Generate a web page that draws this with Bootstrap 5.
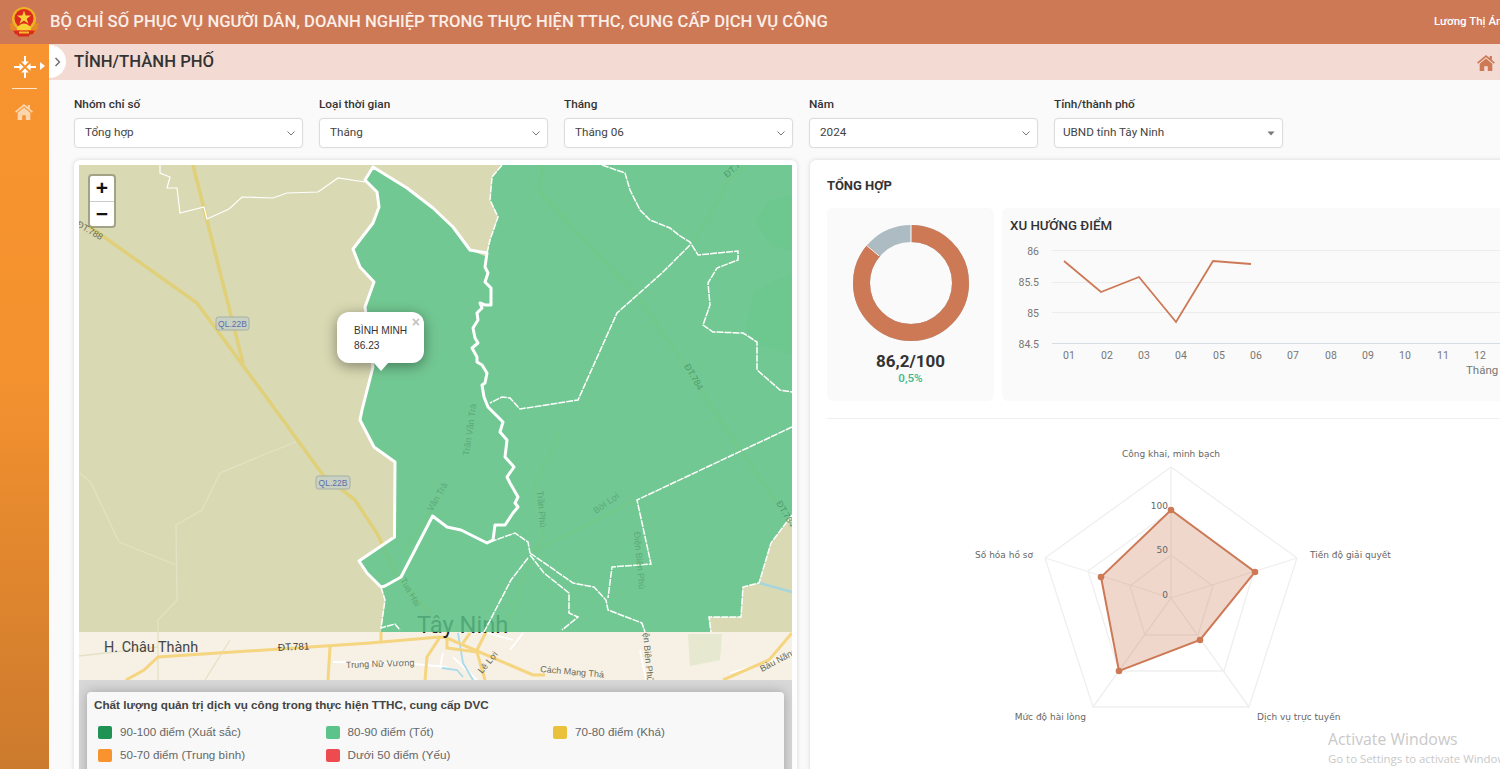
<!DOCTYPE html>
<html lang="vi">
<head>
<meta charset="UTF-8">
<meta name="viewport" content="width=device-width, initial-scale=1.0">
<title>Bộ chỉ số phục vụ</title>
<link rel="stylesheet" href="https://cdn.jsdelivr.net/npm/bootstrap@5.3.3/dist/css/bootstrap.min.css">
<style>
html, body { height: 100%; overflow: hidden; }
body { font-family: Roboto, "Liberation Sans", sans-serif; background: #fafafa; color: #333; }
.top-bar { height: 44px; background: #cd7956; color: #fff; flex-wrap: nowrap; padding: 0 0 0 8px; overflow: hidden; }
.top-title { font-size: 16.65px; font-weight: 500; margin-left: 10px; white-space: nowrap; color: #fbeee8; }
.top-user { font-size: 11.5px; font-weight: 500; white-space: nowrap; width: 66px; overflow: hidden; flex: none; }
.page-body { height: 725px; }
.side-bar { width: 49px; flex: none; background: linear-gradient(180deg, #f79430 0%, #f4922f 45%, #cc7a2d 100%); }
.side-rule { width: 25px; height: 1px; background: #fde6cb; margin: 10px 0 15px 12px; }
.side-top { height: 34px; padding-left: 14px; padding-top: 12px; position: relative; }
.side-top svg, .side-home svg { display: block; }
.side-caret { position: absolute; left: 40px; top: 18px; width: 0; height: 0; border-left: 5px solid #fff; border-top: 4px solid transparent; border-bottom: 4px solid transparent; }
.side-home { padding-left: 15px; }
.main-area { min-width: 0; overflow: hidden; }
.sub-head { height: 36px; background: #f3dbd3; padding: 1px 5px 0 25px; position: relative; }
.sub-title { font-size: 16.7px; font-weight: 500; color: #333; margin: 0; }
.side-toggle { position: absolute; left: 0; top: 1px; width: 17px; height: 33px; background: #fff; border-radius: 0 17px 17px 0; display: flex; align-items: center; padding-left: 5px; }
.filter-row { padding: 17px 0 0 25px; height: 80px; }
.filter-item { width: 229px; flex: none; }
.filter-label { font-size: 11.8px; font-weight: 500; color: #333; margin-bottom: 7px; line-height: 14px; display: block; }
.filter-select { height: 30px; font-size: 11.7px; color: #444; padding: 0 20px 0 10px; border-color: #dcdcdc; border-radius: 4px; box-shadow: 0 0 2px rgba(0,0,0,.06);
  background-size: 10px 10px; background-position: right 6px center;
  background-image: url("data:image/svg+xml,%3csvg xmlns='http://www.w3.org/2000/svg' viewBox='0 0 10 10'%3e%3cpath fill='none' stroke='%23777' d='M1.5 3.5 5 7l3.5-3.5'/%3e%3c/svg%3e"); }
.filter-select.caret-solid { padding-left: 8px; background-image: url("data:image/svg+xml,%3csvg xmlns='http://www.w3.org/2000/svg' viewBox='0 0 10 10'%3e%3cpath fill='%23777' d='M1.500 3.500h7L5 7.500z'/%3e%3c/svg%3e"); }
.cards-row { padding-left: 25px; gap: 13px; }
.map-card { width: 723px; height: 640px; flex: none; background: #fff; border: 0; border-radius: 6px; padding: 5px; box-shadow: 0 0 5px rgba(0,0,0,.14); }
.map-box { position: relative; height: 515px; overflow: hidden; }
.map-box svg { display: block; }
.zoom-box { position: absolute; left: 9px; top: 9px; width: 28px; border: 2px solid rgba(0,0,0,.25); border-radius: 4px; background: #fff; background-clip: padding-box; }
.zoom-btn { height: 25px; text-align: center; font: 700 21px/24px "Liberation Sans", sans-serif; color: #111; }
.zoom-btn + .zoom-btn { border-top: 1px solid #ccc; }
.map-pop { position: absolute; left: 258px; top: 147px; width: 87px; height: 51px; background: #fff; border-radius: 12px; box-shadow: 0 3px 14px rgba(0,0,0,.4); padding: 11px 0 0 17px; font: 10.2px/15px "Liberation Sans", sans-serif; color: #333; }
.map-pop::after { content: ""; position: absolute; left: 36px; bottom: -8px; border-left: 8px solid transparent; border-right: 8px solid transparent; border-top: 9px solid #fff; }
.pop-x { position: absolute; right: 4px; top: 3px; font: 700 14px/14px "Liberation Sans", sans-serif; color: #c3c3c3; }
.legend-wrap { background: #d8d8d8; padding: 12px 8px 0; height: 115px; margin-bottom: -5px; }
.legend-box { background: #f8f8f8; border-radius: 4px; box-shadow: 0 0 12px rgba(0,0,0,.25); padding: 6px 7px; height: 103px; font-family: "Liberation Sans", sans-serif; }
.legend-title { font-size: 11.7px; font-weight: 700; color: #444; line-height: 14px; margin-bottom: 13px; }
.legend-grid { display: grid; grid-template-columns: repeat(3, 227.5px); row-gap: 9px; padding-left: 4px; }
.legend-item { display: flex; align-items: center; gap: 8px; font-size: 11.65px; line-height: 14px; color: #666; }
.legend-swatch { width: 14px; height: 13px; border-radius: 2px; flex: none; }
.sum-card { width: 720px; height: 640px; flex: none; background: #fff; border: 0; border-radius: 6px; padding: 17px 17px 0; box-shadow: 0 0 5px rgba(0,0,0,.14); }
.sum-title { font-size: 13px; font-weight: 700; color: #333; margin: 1px 0 14px; line-height: 16px; }
.panel-soft { background: #fafafa; border-radius: 6px; height: 193px; }
.donut-panel { width: 167px; flex: none; padding-top: 17px; text-align: center; }
.donut-panel svg { display: block; margin: 0 auto 10px; }
.donut-value { font-size: 17px; font-weight: 700; line-height: 20px; color: #333; }
.donut-delta { font-size: 11.6px; font-weight: 500; line-height: 15px; color: #3bb98a; }
.trend-panel { flex: 1; min-width: 0; padding-top: 10px; }
.trend-title { font-size: 13.3px; font-weight: 500; color: #333; margin: 0 0 0 8px; line-height: 15px; height: 18px; }
.trend-panel svg { display: block; }
.sum-rule { height: 1px; background: #f0f0f0; margin: 17px 0 0; }
.radar-chart { display: block; }
.win-mark { position: absolute; left: 1328px; top: 730px; color: #c9c9c9; font-family: "Open Sans", sans-serif; white-space: nowrap; pointer-events: none; }
.win-mark div:first-child { font-size: 15.8px; line-height: 19px; }
.win-mark div:last-child { font-size: 11.4px; line-height: 19px; }
</style>
</head>
<body>
<nav class="navbar top-bar d-flex align-items-center justify-content-between">
  <div class="d-flex align-items-center">
    <svg width="32" height="32" viewBox="0 0 32 32">
      <path d="M4 17 1 18l2 3-1 2 3 1 0 3 4-1 2 3h10l2-3 4 1 0-3 3-1-1-2 2-3-3-1-3 6H7z" fill="#ee8a1c"/>
      <circle cx="16" cy="13" r="12" fill="#f1b124"/>
      <circle cx="16" cy="12.500" r="9.500" fill="#dc2a1e"/>
      <path d="M16 4.500l1.700 5.100h5.300l-4.300 3.100 1.700 5-4.400-3.100-4.400 3.100 1.700-5-4.300-3.100h5.300z" fill="#fbd23a"/>
      <path d="M9 24a7 6.500 0 0 1 14 0z" fill="#f9cf36"/>
      <path d="M5 24.500h22l-2 3.500-3 .5-1.500 2H10.500L9 28.500 7 28z" fill="#d92c1c"/>
      <rect x="11" y="25.500" width="10" height="2" fill="#f6b92b"/>
    </svg>
    <span class="top-title">BỘ CHỈ SỐ PHỤC VỤ NGƯỜI DÂN, DOANH NGHIỆP TRONG THỰC HIỆN TTHC, CUNG CẤP DỊCH VỤ CÔNG</span>
  </div>
  <span class="top-user">Lương Thị Ánh</span>
</nav>

<div class="page-body d-flex">
  <aside class="side-bar">
    <div class="side-top">
      <svg width="22" height="22" viewBox="0 0 22 22" fill="#fff">
        <path d="M10 0h2v5.500h2.800L11 9.600 7.200 5.500H10zM10 22h2v-5.500h2.800L11 12.400l-3.800 4.100H10zM0 10v2h5.500v2.800L9.600 11 5.500 7.200V10zM22 10v2h-5.500v2.800L12.400 11l4.100-3.800V10z"/>
      </svg>
      <span class="side-caret"></span>
    </div>
    <div class="side-rule"></div>
    <div class="side-home">
      <svg width="18" height="16" viewBox="0 0 19 17" fill="#fbd6ad">
        <path d="M9.500 0 0 8l1.100 1.300L9.500 2.300l8.400 7L19 8l-3.200-2.700V1h-2.400v2.300z"/>
        <path d="M9.500 3.700 2.800 9.300V17h4.800v-5h3.800v5h4.800V9.300z"/>
      </svg>
    </div>
  </aside>

  <main class="main-area flex-grow-1">
    <div class="sub-head d-flex align-items-center justify-content-between">
      <div class="side-toggle">
        <svg width="7" height="10" viewBox="0 0 7 10"><path d="M1.500 1 5.500 5l-4 4" fill="none" stroke="#666" stroke-width="1.300"/></svg>
      </div>
      <h1 class="sub-title">TỈNH/THÀNH PHỐ</h1>
      <svg width="18" height="16" viewBox="0 0 19 17" fill="#cd7956">
        <path d="M9.500 0 0 8l1.100 1.300L9.500 2.300l8.400 7L19 8l-3.200-2.700V1h-2.400v2.300z"/>
        <path d="M9.500 3.700 2.800 9.300V17h4.800v-5h3.800v5h4.800V9.300z"/>
      </svg>
    </div>

    <div class="filter-row d-flex gap-3">
      <div class="filter-item">
        <label class="filter-label">Nhóm chỉ số</label>
        <select class="form-select filter-select"><option>Tổng hợp</option></select>
      </div>
      <div class="filter-item">
        <label class="filter-label">Loại thời gian</label>
        <select class="form-select filter-select"><option>Tháng</option></select>
      </div>
      <div class="filter-item">
        <label class="filter-label">Tháng</label>
        <select class="form-select filter-select"><option>Tháng 06</option></select>
      </div>
      <div class="filter-item">
        <label class="filter-label">Năm</label>
        <select class="form-select filter-select"><option>2024</option></select>
      </div>
      <div class="filter-item">
        <label class="filter-label">Tỉnh/thành phố</label>
        <select class="form-select filter-select caret-solid"><option>UBND tỉnh Tây Ninh</option></select>
      </div>
    </div>

    <div class="cards-row d-flex">
      <div class="card map-card">
        <div class="map-box">
          <svg width="713" height="515" viewBox="79 165 713 515">
            <!-- base tiles -->
            <rect x="79" y="165" width="713" height="467" fill="#d9d9b3"/>
            <rect x="79" y="632" width="713" height="48" fill="#f6f0e5"/>
            <path d="M688 634h34l-2 26-30 6z" fill="#e6e9cf"/>
            <path d="M792 195 770 200 755 220 770 245 792 252ZM792 273 755 290 745 330 760 345 792 355Z" fill="#b4d7a0"/>
            <g fill="none" stroke="#e3e3c4" stroke-width="1.300">
              <path d="M296 442 268 453 220 473 202 510 176 525 177 600 158 620V680"/>
              <path d="M80 473 91 483 119 542 176 565"/>
              <path d="M79 656 158 647M230 640 205 680"/>
            </g>
            <!-- roads -->
            <g fill="none" stroke="#e1d07a" stroke-width="3.500">
              <path d="M90 227 197 303 283 420 323 475 355 500 378 535 397 577 429 613"/>
              <path d="M193 165 243 363"/>
              <path d="M542 165 540 192 640 300 683 363 733 440 777 503" stroke="#d9d38b"/>
              <path d="M693 242 717 203 728 180 747 165" stroke="#d9d38b"/>
              <path d="M532 552 635 500M562 430 535 483 544 537 532 552" stroke="#d9d38b" stroke-width="2.500"/>
              <path d="M445 490 405 550M505 632 530 560" stroke="#d9d38b" stroke-width="2.500"/>
            </g>
            <path d="M759 583 792 592" stroke="#a5d6dd" stroke-width="2.500"/>
            <g fill="none" stroke="#fff" stroke-width="1.800">
              <path d="M333 662 403 663 447 667M523 633 510 650M487 633 513 640M453 657 477 680M440 667 443 653M640 650 646 680M730 673 792 655"/>
            </g>
            <path d="M458 633 463 663 473 680M442 668 457 670 463 677" fill="none" stroke="#a8dcea" stroke-width="1.800"/>
            <g fill="none" stroke="#f5d57f" stroke-width="3">
              <path d="M126 680 144 670 158 657 370 643 440 637 447 638 533 675 545 675"/>
              <path d="M330 647 328 680M381 632V642M440 637 427 657 425 680M447 638V648L477 652 485 680M487 630 477 650M470 633 463 643"/>
              <path d="M723 680 769 660 792 633"/>
            </g>
            <text x="417" y="633" font-family="Roboto, sans-serif" font-size="23.700" fill="#222">Tây Ninh</text>
            <!-- green district layer -->
            <path fill="#5cc58b" fill-opacity=".82" d="M373 167 407 188 433 208 453 227 470 250 487 257 490 240 498 217 490 200 492 177 502 165H792V515L771 543 759 583 743 587 741 617 709 617 711 632H381L385 600 381 587 367 573 359 561 394.500 537 395 462 374 447 360 420 362 410 373 367 365 307 374 282 360 267 353 249 373 223 379 207 377 192 365 180Z"/>
            <!-- thin district borders -->
            <g fill="none" stroke="#fff" stroke-width="1.500" stroke-dasharray="7 1">
              <path d="M602 165 625 173 630 190 640 210 650 220 670 228 680 236 690 242 698 255 738 251 738 260 717 268 708 283 710 305 703 325 713 332 743 333 757 342 757 370 780 390 792 392"/>
              <path d="M690 245 662 273 617 313 578 400 520 409 510 398 502 397 490 403"/>
              <path d="M792 427 637 500 651 564 612 567 608 598"/>
              <path d="M530 553 573 583 594 587 606 600 608 610 642 623 645 632"/>
              <path d="M530 555 544 573 569 593 569 613 578 617 562 630"/>
              <path d="M528 558 511 580 484 632"/>
              <path d="M490 542 515 533 528 542 530 553"/>
              <path d="M792 515 771 543 759 583 743 587 741 617 709 617 711 632"/>
              <path d="M381 587 385 600 381 628 395 624 400 630"/>
              <path d="M487 253 490 240 498 217 490 200 492 177 502 165"/>
              <path d="M160 165 160 173 170 177 167 188 177 188 180 213 204 207 207 219 229 209 242 197 273 198 287 193 318 192 338 178 365 182" stroke-dasharray="none" stroke-width="1.200"/>
            </g>
            <!-- selected district -->
            <path fill="none" stroke="#fff" stroke-width="3" stroke-linejoin="round" d="M373 167 407 188 433 208 453 227 470 250 487 253 485 267 488 273 485 282 491 288 491 305 485 305 480 303 482 308 477 313 478 320 473 328 475 338 478 343 472 348 477 357 477 362 482 365 487 373 485 383 482 385 484 397 488 407 503 422 500 432 507 440 505 457 514 467 507 477 510 483 518 497 515 503 518 507 513 513 505 525 495 525 493 540 487 543 461 530 447 527 432.600 516 401 577 385 586 381 587 367 573 359 561 394.500 537 395 462 374 447 360 420 362 410 373 367 365 307 374 282 360 267 353 249 373 223 379 207 377 192 365 180Z"/>
            <!-- map labels -->
            <g font-family="Liberation Sans, sans-serif" font-size="9" fill="#6a6a55">
              <text transform="translate(76 226) rotate(30)">ĐT.788</text>
              <text transform="translate(278 651) rotate(-3)" font-size="10" fill="#444">ĐT.781</text>
              <text x="346" y="668" transform="rotate(-2 346 668)">Trung Nữ Vương</text>
              <text transform="translate(482 674) rotate(-50)">Lê Lợi</text>
              <text transform="translate(540 672) rotate(5)">Cách Mạng Thá</text>
              <text transform="translate(762 672) rotate(-28)">Bàu Năng</text>
              <text transform="translate(643 633) rotate(85)">ện Biên Phủ</text>
              <text transform="translate(684 366) rotate(60)" fill="#4f9a70">ĐT.784</text>
              <text transform="translate(727 178) rotate(-40)" fill="#4f9a70">ĐT.783</text>
              <text transform="translate(776 503) rotate(60)" fill="#4f9a70">ĐT.784</text>
              <text transform="translate(596 514) rotate(-35)" fill="#5aa87a">Bời Lợi</text>
              <text transform="translate(537 491) rotate(85)" fill="#5aa87a">Trần Phú</text>
              <text transform="translate(634 532) rotate(85)" fill="#5aa87a">Điện Biên Phủ</text>
              <text transform="translate(432 512) rotate(-60)" fill="#5aa87a">Văn Trà</text>
              <text transform="translate(400 580) rotate(60)" fill="#5aa87a">Tua Hai</text>
              <text transform="translate(469 456) rotate(-82)" fill="#5aa87a">Trần Văn Trà</text>
            </g>
            <text x="104" y="652" font-family="Roboto, sans-serif" font-size="14.400" fill="#444">H. Châu Thành</text>
            <g font-family="Liberation Sans, sans-serif" font-size="8.500" fill="#5c6ea8" text-anchor="middle">
              <rect x="216" y="317" width="33" height="13" rx="2.500" fill="#c9d1c2" stroke="#a4b0a4"/>
              <text x="232.500" y="327">QL.22B</text>
              <rect x="316" y="476" width="34" height="13" rx="2.500" fill="#c9d1c2" stroke="#a4b0a4"/>
              <text x="333" y="486">QL.22B</text>
            </g>
          </svg>
          <div class="zoom-box">
            <div class="zoom-btn">+</div>
            <div class="zoom-btn">−</div>
          </div>
          <div class="map-pop">
            <span class="pop-x">×</span>
            BÌNH MINH<br>86.23
          </div>
        </div>
        <div class="legend-wrap">
          <div class="legend-box">
            <div class="legend-title">Chất lượng quản trị dịch vụ công trong thực hiện TTHC, cung cấp DVC</div>
            <div class="legend-grid">
              <div class="legend-item"><span class="legend-swatch" style="background:#1f9254"></span>90-100 điểm (Xuất sắc)</div>
              <div class="legend-item"><span class="legend-swatch" style="background:#5cc48b"></span>80-90 điểm (Tốt)</div>
              <div class="legend-item"><span class="legend-swatch" style="background:#eac13b"></span>70-80 điểm (Khá)</div>
              <div class="legend-item"><span class="legend-swatch" style="background:#f9932e"></span>50-70 điểm (Trung bình)</div>
              <div class="legend-item"><span class="legend-swatch" style="background:#ee4b50"></span>Dưới 50 điểm (Yếu)</div>
            </div>
          </div>
        </div>
      </div>

      <div class="card sum-card">
        <div class="sum-title">TỔNG HỢP</div>
        <div class="d-flex gap-2">
          <div class="panel-soft donut-panel">
            <svg width="116" height="116" viewBox="0 0 116 116">
              <g fill="none" stroke-width="17" transform="rotate(-90 58 58)">
                <circle cx="58" cy="58" r="49.500" stroke="#adbcc3"/>
                <circle cx="58" cy="58" r="49.500" stroke="#cd7956" stroke-dasharray="268.100 311"/>
              </g>
              <path d="M58 0V17M13.700 20.500 26 30.800" stroke="#fff" stroke-width="1"/>
            </svg>
            <div class="donut-value">86,2/100</div>
            <div class="donut-delta">0,5%</div>
          </div>
          <div class="panel-soft trend-panel">
            <div class="trend-title">XU HƯỚNG ĐIỂM</div>
            <svg width="510" height="165" viewBox="1002 236 510 165" font-family="Roboto, sans-serif" font-size="10.500" fill="#777">
              <g stroke="#ececec">
                <path d="M1052 250.500H1512M1052 282.500H1512M1052 312.500H1512"/>
                <path d="M1052 343.500H1512" stroke="#d5dde6"/>
              </g>
              <g text-anchor="end">
                <text x="1039" y="255">86</text>
                <text x="1039" y="286">85.5</text>
                <text x="1039" y="317">85</text>
                <text x="1039" y="348">84.5</text>
              </g>
              <g text-anchor="middle">
                <text x="1069" y="359">01</text>
                <text x="1107" y="359">02</text>
                <text x="1144" y="359">03</text>
                <text x="1181" y="359">04</text>
                <text x="1219" y="359">05</text>
                <text x="1256" y="359">06</text>
                <text x="1293" y="359">07</text>
                <text x="1331" y="359">08</text>
                <text x="1368" y="359">09</text>
                <text x="1405" y="359">10</text>
                <text x="1443" y="359">11</text>
                <text x="1480" y="359">12</text>
              </g>
              <text x="1466" y="374" font-size="11.500">Tháng</text>
              <path d="M1064 261 1101 292 1139 277 1176 322 1213 261 1251 264" fill="none" stroke="#cd7956" stroke-width="1.800"/>
            </svg>
          </div>
        </div>
        <div class="sum-rule"></div>
        <svg class="radar-chart" width="686" height="350" viewBox="827 419 686 350">
          <g fill="none" stroke="#efefef" stroke-width="1.300">
            <path d="M1171 467 1297 558 1249 707 1093 707 1045 558Z"/>
            <path d="M1171 511 1254 571 1224 671 1119 671 1088 571Z"/>
            <path d="M1171 555 1213 586 1198 635 1145 635 1130 586Z"/>
            <path d="M1171 598V467M1171 598 1297 558M1171 598 1249 707M1171 598 1093 707M1171 598 1045 558"/>
          </g>
          <path d="M1171 510 1255 572 1200 640 1119 671 1101 577Z" fill="#cd7956" fill-opacity=".3" stroke="#cd7956" stroke-width="2"/>
          <g fill="#cd7956">
            <circle cx="1171" cy="510" r="3.300"/><circle cx="1255" cy="572" r="3.300"/><circle cx="1200" cy="640" r="3.300"/><circle cx="1119" cy="671" r="3.300"/><circle cx="1101" cy="577" r="3.300"/>
          </g>
          <g font-family="DejaVu Sans, sans-serif" font-size="9" fill="#666">
            <text x="1171" y="457" text-anchor="middle">Công khai, minh bạch</text>
            <text x="1310" y="558">Tiến độ giải quyết</text>
            <text x="1257" y="720">Dịch vụ trực tuyến</text>
            <text x="1086" y="720" text-anchor="end">Mức độ hài lòng</text>
            <text x="1033" y="558" text-anchor="end">Số hóa hồ sơ</text>
            <text x="1168" y="509" text-anchor="end">100</text>
            <text x="1168" y="553" text-anchor="end">50</text>
            <text x="1168" y="598" text-anchor="end">0</text>
          </g>
        </svg>
      </div>
    </div>
  </main>
</div>
<div class="win-mark"><div>Activate Windows</div><div>Go to Settings to activate Windows.</div></div>
<script src="https://cdn.jsdelivr.net/npm/bootstrap@5.3.3/dist/js/bootstrap.bundle.min.js"></script>
</body>
</html>
